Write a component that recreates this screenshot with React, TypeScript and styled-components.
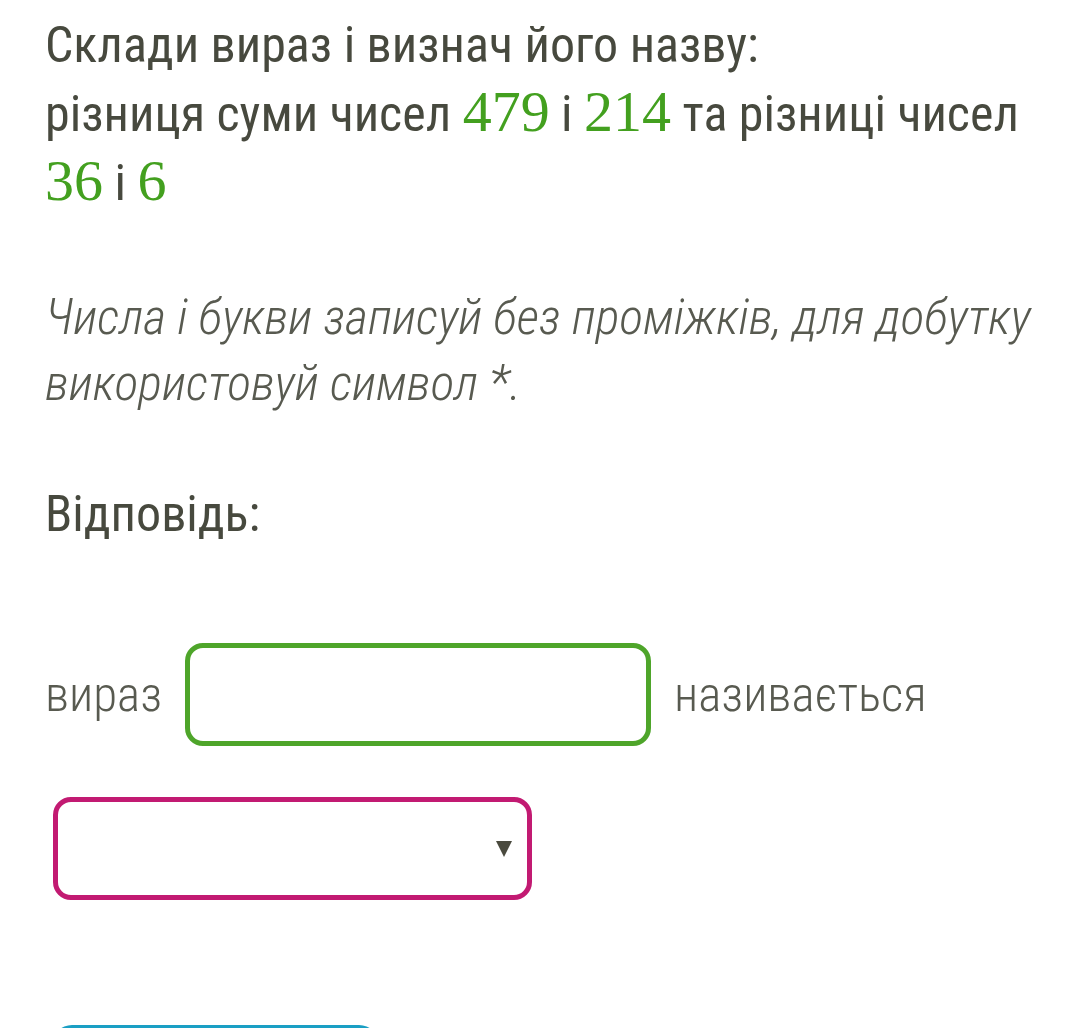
import styled, { createGlobalStyle } from "styled-components";

const GlobalStyle = createGlobalStyle`
  html, body {
    margin: 0;
    padding: 0;
    background: #ffffff;
  }
  body {
    font-family: "Roboto Condensed", "Roboto", sans-serif;
    color: #47493e;
  }
`;

const Page = styled.div`
  width: 1065px;
  height: 1028px;
  overflow: hidden;
  box-sizing: border-box;
  padding: 11px 30px 0 45px;
`;

const Question = styled.p`
  margin: 0;
  font-size: 50px;
  line-height: 69px;
  font-weight: 400;
`;

const Num = styled.span`
  font-family: "Liberation Serif", "DejaVu Serif", serif;
  color: #43a01f;
  font-size: 58px;
  line-height: 1;
`;

const Hint = styled.p`
  margin: 66px 0 0;
  font-size: 50px;
  line-height: 66px;
  font-style: italic;
  font-weight: 300;
  color: #585a50;
`;

const AnswerTitle = styled.h2`
  margin: 68px 0 0;
  font-size: 50px;
  line-height: 60px;
  font-weight: 400;
`;

const Row = styled.div`
  display: flex;
  align-items: center;
  gap: 23px;
  margin-top: 99px;
`;

const Word = styled.span`
  font-size: 49px;
  font-weight: 300;
  color: #585a50;
`;

const TextBox = styled.input`
  box-sizing: border-box;
  width: 466px;
  height: 103px;
  border: 5px solid #4ea52a;
  border-radius: 18px;
  background: #fff;
  outline: none;
`;

const SelectBox = styled.div`
  box-sizing: border-box;
  width: 479px;
  height: 103px;
  margin: 51px 0 0 8px;
  border: 5px solid #c21a72;
  border-radius: 18px;
  display: flex;
  align-items: center;
  justify-content: flex-end;
  padding-right: 15px;
`;

const Arrow = styled.span`
  width: 0;
  height: 0;
  border-left: 8px solid transparent;
  border-right: 8px solid transparent;
  border-top: 16px solid #4a4a3e;
`;

const Button = styled.div`
  width: 327px;
  height: 60px;
  margin: 125px 0 0 7px;
  border-radius: 20px;
  background: #1a9fc4;
`;

export default function App() {
  return (
    <>
      <GlobalStyle />
      <Page>
        <Question>
          Склади вираз і визнач його назву:
          <br />
          різниця суми чисел <Num>479</Num> і <Num>214</Num> та різниці чисел{" "}
          <Num>36</Num> і <Num>6</Num>
        </Question>
        <Hint>
          Числа і букви записуй без проміжків, для добутку використовуй символ *.
        </Hint>
        <AnswerTitle>Відповідь:</AnswerTitle>
        <Row>
          <Word>вираз</Word>
          <TextBox type="text" />
          <Word>називається</Word>
        </Row>
        <SelectBox>
          <Arrow />
        </SelectBox>
        <Button />
      </Page>
    </>
  );
}
